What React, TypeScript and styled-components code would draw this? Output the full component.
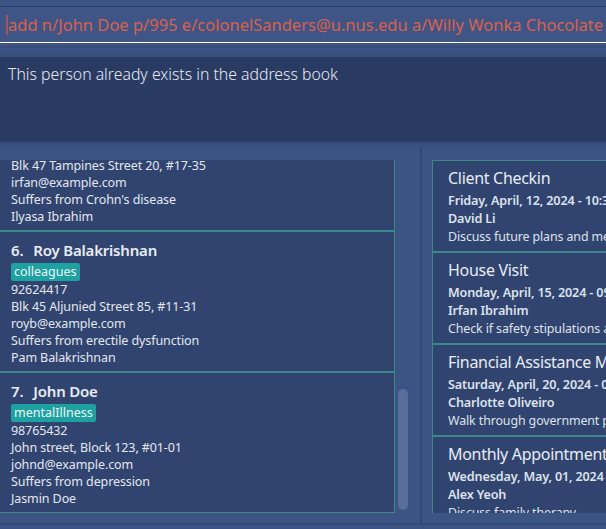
import React from "react";
import styled, { createGlobalStyle } from "styled-components";

const FONT = `"Noto Sans", "Open Sans", sans-serif`;
const TEAL = "#3a8a8c";
const CARD_BG = "#30446f";
const BAND = "#3c5483";

const Global = createGlobalStyle`
  html, body { margin: 0; padding: 0; background: ${BAND}; }
  * { box-sizing: border-box; }
`;

const Root = styled.div`
  width: 606px;
  height: 529px;
  overflow: hidden;
  display: flex;
  flex-direction: column;
  background: ${BAND};
  font-family: ${FONT};
`;

const TopStrip = styled.div`
  height: 7px;
  flex-shrink: 0;
  border-bottom: 1px solid #2b3e69;
`;

const CommandBar = styled.div`
  height: 36px;
  flex-shrink: 0;
  display: flex;
  align-items: center;
  padding-left: 6px;
  background: #3e5585;
  border-bottom: 1px solid #ffffff;
  overflow: hidden;
`;

const Caret = styled.span`
  width: 2px;
  height: 20px;
  flex-shrink: 0;
  background: #a65159;
`;

const CommandText = styled.span`
  color: #d9614f;
  font-size: 16.5px;
  white-space: nowrap;
  margin-top: -1px;
`;

const Band = styled.div<{ $stripes: string; $h: number }>`
  height: ${(p) => p.$h}px;
  flex-shrink: 0;
  background: ${(p) => p.$stripes};
`;

const ResultBox = styled.div`
  height: 84px;
  flex-shrink: 0;
  background: #293a63;
  padding: 6px 8px;
  color: #e6eaf2;
  font-size: 15.8px;
  font-weight: 300;
  line-height: 22px;
`;

const Main = styled.div`
  height: 382px;
  flex-shrink: 0;
  display: grid;
  grid-template-columns: 420px 2px 1fr;
  background: linear-gradient(to bottom, #2f4271 0 2px, #37507e 2px 6px, ${BAND} 6px);
`;

const LeftPane = styled.div`
  display: grid;
  grid-template-columns: 395px 25px;
  padding: 19px 0 10px 0;
  min-height: 0;
`;

const PersonList = styled.div`
  overflow: hidden;
  height: 353px;
`;

const Scroller = styled.div<{ $offset: number }>`
  display: flex;
  flex-direction: column;
  margin-top: ${(p) => -p.$offset}px;
`;

const PersonCard = styled.div`
  background: ${CARD_BG};
  border-right: 1px solid ${TEAL};
  border-bottom: 2px solid ${TEAL};
  padding: 6px 11px 5px 11px;
  color: #e3e7ef;
`;

const NameRow = styled.div`
  display: flex;
  gap: 10px;
  height: 24px;
  align-items: center;
  font-size: 15px;
  font-weight: 600;
  letter-spacing: -0.2px;
  color: #e8ecf5;
`;

const TagRow = styled.div`
  display: flex;
  gap: 4px;
  margin-top: 1px;
`;

const Tag = styled.span`
  background: #1da1a1;
  color: #eef7f7;
  font-size: 12.5px;
  height: 18px;
  line-height: 18px;
  padding: 0 3px;
  border-radius: 2px;
`;

const Line = styled.div`
  font-size: 12.5px;
  letter-spacing: -0.1px;
  line-height: 17px;
  white-space: nowrap;
`;

const ScrollTrack = styled.div`
  display: flex;
  flex-direction: column;
  justify-content: flex-end;
  padding: 0 0 3px 3px;
  height: 353px;
`;

const Thumb = styled.div<{ $h: number }>`
  width: 10px;
  height: ${(p) => p.$h}px;
  border-radius: 5px;
  background: #5b6d9b;
`;

const Divider = styled.div`
  margin-top: 6px;
  background: #33497a;
`;

const RightPane = styled.div`
  padding: 19px 0 10px 10px;
  overflow: hidden;
  min-width: 0;
`;

const EventList = styled.div`
  height: 353px;
  width: 420px;
  overflow: hidden;
  border-left: 1px solid ${TEAL};
  border-top: 1px solid ${TEAL};
`;

const EventCard = styled.div`
  background: ${CARD_BG};
  border-bottom: 2px solid ${TEAL};
  padding: 4px 0 5px 15px;
  color: #dde2ec;
  white-space: nowrap;
`;

const EventTitle = styled.div`
  font-size: 16px;
  letter-spacing: -0.3px;
  line-height: 27px;
  color: #e8ecf4;
`;

const EventLine = styled.div<{ $strong?: boolean }>`
  font-size: ${(p) => (p.$strong ? "12.6px" : "12.4px")};
  line-height: 18px;
  letter-spacing: ${(p) => (p.$strong ? "-0.15px" : "-0.1px")};
  font-weight: ${(p) => (p.$strong ? 600 : 400)};
`;

const BottomStrip = styled.div`
  flex: 1;
  border-top: 2px solid #34497a;
`;

type Person = {
  id: number;
  name: string;
  tags: string[];
  phone: string;
  address: string;
  email: string;
  condition: string;
  kin: string;
};

const persons: Person[] = [
  {
    id: 5,
    name: "Irfan Ibrahim",
    tags: ["classmates"],
    phone: "92492021",
    address: "Blk 47 Tampines Street 20, #17-35",
    email: "irfan@example.com",
    condition: "Suffers from Crohn's disease",
    kin: "Ilyasa Ibrahim",
  },
  {
    id: 6,
    name: "Roy Balakrishnan",
    tags: ["colleagues"],
    phone: "92624417",
    address: "Blk 45 Aljunied Street 85, #11-31",
    email: "royb@example.com",
    condition: "Suffers from erectile dysfunction",
    kin: "Pam Balakrishnan",
  },
  {
    id: 7,
    name: "John Doe",
    tags: ["mentalIllness"],
    phone: "98765432",
    address: "John street, Block 123, #01-01",
    email: "johnd@example.com",
    condition: "Suffers from depression",
    kin: "Jasmin Doe",
  },
];

type Appt = { title: string; date: string; person: string; desc: string };

const appts: Appt[] = [
  {
    title: "Client Checkin",
    date: "Friday, April, 12, 2024 - 10:30",
    person: "David Li",
    desc: "Discuss future plans and medication",
  },
  {
    title: "House Visit",
    date: "Monday, April, 15, 2024 - 09:00",
    person: "Irfan Ibrahim",
    desc: "Check if safety stipulations are met",
  },
  {
    title: "Financial Assistance Meeting",
    date: "Saturday, April, 20, 2024 - 09:00",
    person: "Charlotte Oliveiro",
    desc: "Walk through government payouts",
  },
  {
    title: "Monthly Appointment",
    date: "Wednesday, May, 01, 2024 - 14:00",
    person: "Alex Yeoh",
    desc: "Discuss family therapy",
  },
];

export default function App() {
  return (
    <Root>
      <Global />
      <TopStrip />
      <CommandBar>
        <Caret />
        <CommandText>
          add n/John Doe p/995 e/colonelSanders@u.nus.edu a/Willy Wonka Chocolate
        </CommandText>
      </CommandBar>
      <Band
        $h={14}
        $stripes={`linear-gradient(to bottom, ${BAND} 0 3px, #374c7b 3px 5px, ${BAND} 5px 10px, #37507f 10px 14px)`}
      />
      <ResultBox>This person already exists in the address book</ResultBox>
      <Main>
        <LeftPane>
          <PersonList>
            <Scroller $offset={69}>
              {persons.map((p) => (
                <PersonCard key={p.id}>
                  <NameRow>
                    <span>{p.id}.</span>
                    <span>{p.name}</span>
                  </NameRow>
                  <TagRow>
                    {p.tags.map((t) => (
                      <Tag key={t}>{t}</Tag>
                    ))}
                  </TagRow>
                  <Line>{p.phone}</Line>
                  <Line>{p.address}</Line>
                  <Line>{p.email}</Line>
                  <Line>{p.condition}</Line>
                  <Line>{p.kin}</Line>
                </PersonCard>
              ))}
            </Scroller>
          </PersonList>
          <ScrollTrack>
            <Thumb $h={121} />
          </ScrollTrack>
        </LeftPane>
        <Divider />
        <RightPane>
          <EventList>
            {appts.map((a) => (
              <EventCard key={a.title}>
                <EventTitle>{a.title}</EventTitle>
                <EventLine $strong>{a.date}</EventLine>
                <EventLine $strong>{a.person}</EventLine>
                <EventLine>{a.desc}</EventLine>
              </EventCard>
            ))}
          </EventList>
        </RightPane>
      </Main>
      <BottomStrip />
    </Root>
  );
}
